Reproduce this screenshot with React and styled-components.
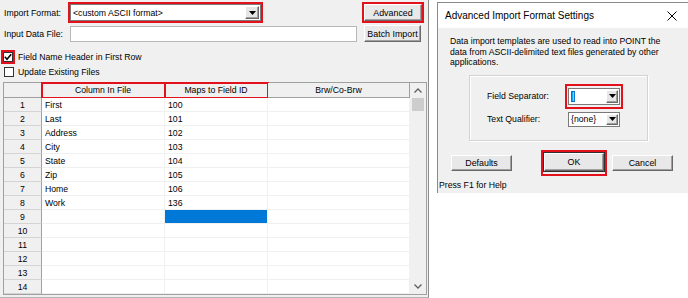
import React from 'react';
import styled, { createGlobalStyle } from 'styled-components';

const GlobalStyle = createGlobalStyle`
  html, body { margin: 0; padding: 0; background: #ffffff; }
  body {
    font-family: "Liberation Sans", Arial, sans-serif;
    font-size: 8.7px;
    color: #000;
  }
  #root { width: 688px; height: 298px; overflow: hidden; }
  * { box-sizing: border-box; }
`;

const RED = '#e3111b';

const Screen = styled.div`
  display: flex;
  align-items: flex-start;
  width: 688px;
  height: 298px;
`;

const MainWindow = styled.div`
  width: 429px;
  height: 298px;
  flex-shrink: 0;
  background: #f0f0f0;
  border-right: 1px solid #8c8c8c;
  border-bottom: 1px solid #b4b4b4;
  display: flex;
  flex-direction: column;
`;

const ToolRow = styled.div`
  display: flex;
  align-items: center;
  height: ${p => p.$h}px;
  margin-top: ${p => p.$mt || 0}px;
  padding: 0 4px 0 ${p => (p.$pl ?? 4)}px;
  white-space: nowrap;
`;

const FieldLabel = styled.span`
  width: ${p => p.$w}px;
  flex-shrink: 0;
  white-space: nowrap;
`;

const RedFrame = styled.div`
  display: inline-flex;
  align-items: center;
  flex-shrink: 0;
  border: 2px solid ${RED};
  padding: ${p => p.$pad || '0'};
  margin-left: ${p => p.$ml || '0'};
`;

const Combo = styled.div`
  width: ${p => p.$w}px;
  height: ${p => p.$h}px;
  background: #fff;
  border: 1px solid #7a7a7a;
  display: flex;
  align-items: center;
  padding-left: 2px;
  white-space: nowrap;
`;

const DropButton = styled.div`
  margin-left: auto;
  margin-right: 1px;
  width: ${p => p.$w || 13}px;
  height: ${p => p.$h || 13}px;
  background: #e6e6e6;
  border-top: 1px solid #fff;
  border-left: 1px solid #fff;
  border-right: 1px solid #696969;
  border-bottom: 1px solid #696969;
  box-shadow: inset -1px -1px 0 #a0a0a0;
  display: flex;
  align-items: center;
  justify-content: center;
`;

const TextInput = styled.div`
  width: ${p => p.$w}px;
  height: ${p => p.$h}px;
  background: #fff;
  border: 1px solid #b8b8b8;
  margin-left: ${p => p.$ml || 0}px;
`;

const Button = styled.div`
  width: ${p => p.$w}px;
  height: ${p => p.$h}px;
  margin-left: ${p => p.$ml || 0}px;
  flex-shrink: 0;
  background: #e8e8e8;
  border-top: 1px solid #fff;
  border-left: 1px solid #fff;
  border-right: 1px solid #696969;
  border-bottom: 1px solid #696969;
  box-shadow: inset -1px -1px 0 #a0a0a0${p => (p.$default ? ', 0 0 0 1px #303030' : '')};
  display: flex;
  align-items: center;
  justify-content: center;
  white-space: nowrap;
  font-size: 8.9px;
`;

const CheckBox = styled.div`
  width: 10px;
  height: 10px;
  background: #fff;
  border: 1px solid #333;
  display: flex;
  align-items: center;
  justify-content: center;
  flex-shrink: 0;
`;

const CheckLabel = styled.span`
  margin-left: ${p => p.$ml}px;
`;

const GridFrame = styled.div`
  margin: 5px 0 0 3px;
  width: 424px;
  height: 213px;
  border: 1px solid #a0a0a0;
  background: #fff;
  display: flex;
`;

const Table = styled.div`
  display: grid;
  grid-template-columns: 38px 123px 103px 142px;
  grid-template-rows: 15px repeat(14, 14px);
  align-content: start;
`;

const HeaderCell = styled.div`
  background: #f0f0f0;
  border-right: 1px solid #a0a0a0;
  border-bottom: 1px solid #a0a0a0;
  display: flex;
  align-items: center;
  justify-content: center;
  white-space: nowrap;
  outline: ${p => (p.$marked ? `2px solid ${RED}` : 'none')};
  outline-offset: -1px;
`;

const RowHead = styled.div`
  background: #f0f0f0;
  border-right: 1px solid #a0a0a0;
  border-bottom: 1px solid #d4d4d4;
  display: flex;
  align-items: center;
  justify-content: center;
`;

const DataCell = styled.div`
  background: ${p => (p.$selected ? '#0078d7' : '#fff')};
  border-right: 1px solid #f0f0f0;
  border-bottom: 1px solid #f0f0f0;
  display: flex;
  align-items: center;
  padding-left: 3px;
  white-space: nowrap;
`;

const ScrollBar = styled.div`
  width: 16px;
  background: #f0f0f0;
  display: flex;
  flex-direction: column;
  align-items: center;
`;

const ScrollArrow = styled.div`
  width: 16px;
  height: ${p => p.$h}px;
  display: flex;
  align-items: center;
  justify-content: center;
`;

const ScrollThumb = styled.div`
  width: 12px;
  height: 13px;
  background: #cdcdcd;
`;

const ScrollTrack = styled.div`
  flex: 1;
`;

/* Dialog */
const Dialog = styled.div`
  margin-left: 8px;
  margin-top: 2px;
  width: 251px;
  height: 191px;
  flex-shrink: 0;
  background: #f0f0f0;
  border-left: 1px solid #8a8a8a;
  border-top: 1px solid #8a8a8a;
  display: flex;
  flex-direction: column;
`;

const TitleBar = styled.div`
  height: 25px;
  background: #fff;
  display: flex;
  align-items: center;
  padding: 0 11px 0 7px;
  font-size: 10px;
  white-space: nowrap;
`;

const CloseBox = styled.div`
  margin-left: auto;
  width: 10px;
  height: 10px;
  display: flex;
`;

const Description = styled.div`
  margin: 8px 0 0 12px;
  line-height: 10.6px;
  white-space: nowrap;
`;

const GroupBox = styled.div`
  margin: 7px 0 0 31px;
  width: 179px;
  height: 66px;
  border: 1px solid #d3d3d3;
  box-shadow: 1px 1px 0 #fff, inset 1px 1px 0 #fff;
  padding: 8px 0 0 17px;
  display: flex;
  flex-direction: column;
`;

const GroupRow = styled.div`
  display: flex;
  align-items: center;
  margin-top: ${p => p.$mt || 0}px;
  padding-left: ${p => p.$pl || 0}px;
  white-space: nowrap;
`;

const Selection = styled.span`
  background: #0078d7;
  color: #fff;
  padding: 0 1px;
  line-height: 11px;
`;

const ButtonRow = styled.div`
  display: flex;
  align-items: center;
  margin: 9px 0 0 13px;
`;

const StatusText = styled.div`
  margin: 4px 0 0 1px;
  white-space: nowrap;
`;

const DownTriangle = () => (
  <svg width="7" height="4" viewBox="0 0 7 4">
    <polygon points="0,0 7,0 3.5,4" fill="#000" />
  </svg>
);

const Chevron = ({ up }) => (
  <svg width="8" height="5" viewBox="0 0 8 5">
    <polyline
      points={up ? '0.5,4.5 4,1 7.5,4.5' : '0.5,0.5 4,4 7.5,0.5'}
      fill="none"
      stroke="#606060"
      strokeWidth="1.3"
    />
  </svg>
);

const CheckMark = () => (
  <svg width="8" height="8" viewBox="0 0 8 8">
    <polyline points="0.8,3.8 3,6.2 7.2,1.2" fill="none" stroke="#000" strokeWidth="1.6" />
  </svg>
);

const CloseIcon = () => (
  <svg width="10" height="10" viewBox="0 0 10 10">
    <line x1="0.5" y1="0.5" x2="9.5" y2="9.5" stroke="#000" strokeWidth="1" />
    <line x1="9.5" y1="0.5" x2="0.5" y2="9.5" stroke="#000" strokeWidth="1" />
  </svg>
);

const rows = [
  ['First', '100'],
  ['Last', '101'],
  ['Address', '102'],
  ['City', '103'],
  ['State', '104'],
  ['Zip', '105'],
  ['Home', '106'],
  ['Work', '136'],
];

export default function App() {
  const gridRows = Array.from({ length: 14 }, (_, i) => rows[i] || ['', '']);
  return (
    <>
      <GlobalStyle />
      <Screen>
        <MainWindow>
          <ToolRow $h={21} $mt={2}>
            <FieldLabel $w={64}>Import Format:</FieldLabel>
            <RedFrame>
              <Combo $w={191} $h={17}>
                &lt;custom ASCII format&gt;
                <DropButton $w={14} $h={13}>
                  <DownTriangle />
                </DropButton>
              </Combo>
            </RedFrame>
            <RedFrame $ml="auto">
              <Button $w={58} $h={17}>Advanced</Button>
            </RedFrame>
          </ToolRow>
          <ToolRow $h={17} $mt={2}>
            <FieldLabel $w={66}>Input Data File:</FieldLabel>
            <TextInput $w={287} $h={16} />
            <Button $w={57} $h={17} $ml={7}>Batch Import</Button>
          </ToolRow>
          <ToolRow $h={14} $mt={8} $pl={1}>
            <RedFrame $pad="0">
              <CheckBox>
                <CheckMark />
              </CheckBox>
            </RedFrame>
            <CheckLabel $ml={3}>Field Name Header in First Row</CheckLabel>
          </ToolRow>
          <ToolRow $h={11} $mt={2} $pl={4}>
            <CheckBox />
            <CheckLabel $ml={4}>Update Existing Files</CheckLabel>
          </ToolRow>
          <GridFrame>
            <Table>
              <HeaderCell />
              <HeaderCell $marked>Column In File</HeaderCell>
              <HeaderCell $marked>Maps to Field ID</HeaderCell>
              <HeaderCell>Brw/Co-Brw</HeaderCell>
              {gridRows.map((r, i) => (
                <React.Fragment key={i}>
                  <RowHead>{i + 1}</RowHead>
                  <DataCell>{r[0]}</DataCell>
                  <DataCell $selected={i === 8}>{r[1]}</DataCell>
                  <DataCell />
                </React.Fragment>
              ))}
            </Table>
            <ScrollBar>
              <ScrollArrow $h={15}>
                <Chevron up />
              </ScrollArrow>
              <ScrollThumb />
              <ScrollTrack />
              <ScrollArrow $h={15}>
                <Chevron />
              </ScrollArrow>
            </ScrollBar>
          </GridFrame>
        </MainWindow>

        <Dialog>
          <TitleBar>
            Advanced Import Format Settings
            <CloseBox>
              <CloseIcon />
            </CloseBox>
          </TitleBar>
          <Description>
            Data import templates are used to read into POINT the
            <br />
            data from ASCII-delimited text files generated by other
            <br />
            applications.
          </Description>
          <GroupBox>
            <GroupRow>
              <FieldLabel $w={78}>Field Separator:</FieldLabel>
              <RedFrame $pad="2px 1px">
                <Combo $w={52} $h={17}>
                  <Selection>|</Selection>
                  <DropButton $w={12} $h={13}>
                    <DownTriangle />
                  </DropButton>
                </Combo>
              </RedFrame>
            </GroupRow>
            <GroupRow $mt={3}>
              <FieldLabel $w={81}>Text Qualifier:</FieldLabel>
              <Combo $w={52} $h={15}>
                {'{none}'}
                <DropButton $w={12} $h={11}>
                  <DownTriangle />
                </DropButton>
              </Combo>
            </GroupRow>
          </GroupBox>
          <ButtonRow>
            <Button $w={61} $h={16}>Defaults</Button>
            <RedFrame $pad="1px 1px 3px 1px" $ml="29px">
              <Button $w={60} $h={18} $default>OK</Button>
            </RedFrame>
            <Button $w={61} $h={16} $ml={5}>Cancel</Button>
          </ButtonRow>
          <StatusText>Press F1 for Help</StatusText>
        </Dialog>
      </Screen>
    </>
  );
}
